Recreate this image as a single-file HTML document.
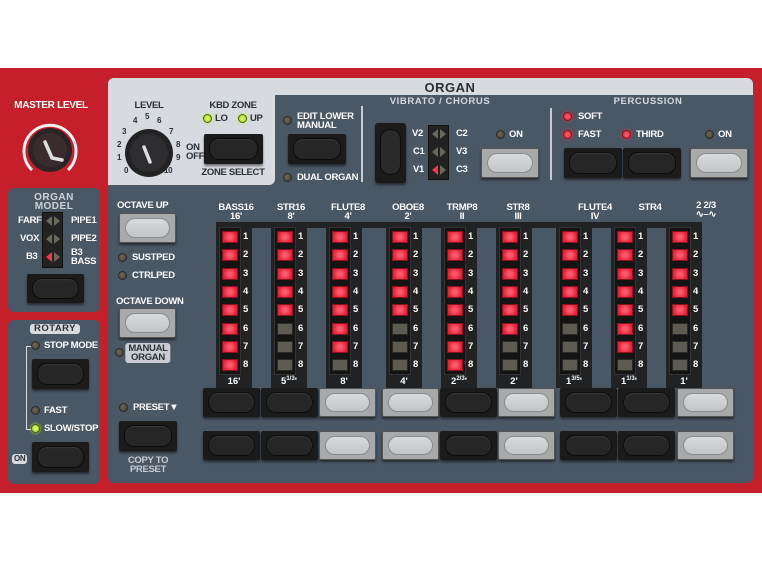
<!DOCTYPE html>
<html><head><meta charset="utf-8"><style>
*{margin:0;padding:0;box-sizing:border-box}
body{width:762px;height:562px;background:#fff;position:relative;overflow:hidden;font-family:"Liberation Sans",sans-serif;font-weight:bold;color:#fff}
.a{position:absolute}
.t{position:absolute;font-size:9.5px;letter-spacing:-0.3px;white-space:nowrap;line-height:10px}
.tc{transform:translateX(-50%);text-align:center}
.dk{color:#2b2f36}
.btn{position:absolute;border-radius:2px;padding:4px 5px}
.btn i{display:block;width:100%;height:100%;border-radius:10px}
.bd{background:#1b1b1c;box-shadow:0 2px 2px rgba(0,0,0,.5)}
.bd i{background:#262627;border:1px solid #0c0c0c;box-shadow:inset 0 1px 1px #3a3a3a}
.bl{background:#a8a9ab;box-shadow:0 2px 2px rgba(0,0,0,.5);border:1px solid #555}
.bl i{background:linear-gradient(#d9dadc,#c3c4c6);border:1px solid #8a8b8d}
.led{position:absolute;width:9px;height:9px;border-radius:50%;background:radial-gradient(circle at 40% 40%,#6e6a5c,#3a3830);border:1px solid #2a2a2a}
.lr{background:radial-gradient(circle,#ff6070,#e0203a);border-color:#8a1020;box-shadow:0 0 3px #f03040}
.lg{background:radial-gradient(circle,#e8ff70,#90d010);border-color:#506010;box-shadow:0 0 3px #c0f030}
.strip{position:absolute;top:222px;width:36px;height:166px;background:#202224}
.slot{position:absolute;left:3px;top:5px;width:22px;height:148px;background:#141414;border:1px solid #333}
.L{position:absolute;left:6px;width:16px;height:12px;background:#5e5c52;border:1px solid #2a2a26}
.L.on{background:radial-gradient(circle,#ff5a6c 20%,#e21e36 80%);border-color:#901020}
.n{position:absolute;left:27px;font-size:9.5px;line-height:10px}
.ft{position:absolute;top:154px;left:0;width:36px;text-align:center;font-size:9.5px}
.ft sup{font-size:6px}
.sel{position:absolute;background:#222;border:1px solid #111}
.tri{position:absolute;width:0;height:0;border-top:5px solid transparent;border-bottom:5px solid transparent}
</style></head><body>
<!-- red panel -->
<div class="a" style="left:0;top:68px;width:762px;height:425px;background:#c41f2b"></div>
<!-- main panel -->
<div class="a" style="left:108px;top:78px;width:645px;height:405px;background:#4a5765;border-radius:6px"></div>
<div class="a" style="left:108px;top:78px;width:645px;height:17px;background:#d7dadf;border-radius:6px 6px 0 0"></div>
<div class="a" style="left:108px;top:78px;width:167px;height:107px;background:#d7dadf;border-radius:6px 0 6px 0"></div>
<div class="t tc dk" style="left:450px;top:81px;font-size:13px;line-height:13px;letter-spacing:0.5px">ORGAN</div>

<!-- master level -->
<div class="t tc" style="left:51px;top:101px;font-size:10px">MASTER LEVEL</div>
<svg class="a" style="left:18px;top:118px" width="64" height="64"><path d="M14 52 A26 26 0 1 1 50 52" fill="none" stroke="#f0f0f0" stroke-width="3"/><circle cx="32" cy="32" r="22" fill="#2a2426"/><circle cx="32" cy="32" r="17" fill="#3a2c2e"/><path d="M27 24 L34 40 L44 42" fill="none" stroke="#ddd" stroke-width="3.5" stroke-linecap="round"/></svg>

<!-- organ model box -->
<div class="a" style="left:8px;top:188px;width:92px;height:124px;background:#4a5765;border-radius:6px"></div>
<div class="t tc" style="left:54px;top:193px;font-size:10px;line-height:9px;color:#cfd3d8;letter-spacing:0.5px">ORGAN<br>MODEL</div>
<div class="t" style="left:18px;top:216px">FARF</div>
<div class="t" style="left:20px;top:234px">VOX</div>
<div class="t" style="left:26px;top:252px">B3</div>
<div class="t" style="left:71px;top:216px">PIPE1</div>
<div class="t" style="left:71px;top:234px">PIPE2</div>
<div class="t" style="left:71px;top:249px;line-height:8.5px">B3<br>BASS</div>
<div class="sel" style="left:42px;top:212px;width:21px;height:56px"></div>
<div class="tri" style="left:46px;top:216px;border-right:6px solid #6a6a5a"></div><div class="tri" style="left:54px;top:216px;border-left:6px solid #6a6a5a"></div>
<div class="tri" style="left:46px;top:234px;border-right:6px solid #6a6a5a"></div><div class="tri" style="left:54px;top:234px;border-left:6px solid #6a6a5a"></div>
<div class="tri" style="left:46px;top:252px;border-right:6px solid #ff3050"></div><div class="tri" style="left:54px;top:252px;border-left:6px solid #6a6a5a"></div>
<div class="btn bd" style="left:27px;top:274px;width:57px;height:29px"><i></i></div>

<!-- rotary box -->
<div class="a" style="left:8px;top:320px;width:92px;height:164px;background:#4a5765;border-radius:6px"></div>
<div class="t tc dk" style="left:55px;top:324px;background:#d7dadf;border-radius:3px;padding:0 4px;letter-spacing:0.5px">ROTARY</div>
<div class="a" style="left:26px;top:346px;width:6px;height:84px;border:1px solid #ddd;border-right:none"></div>
<div class="led" style="left:31px;top:341px"></div><div class="t" style="left:44px;top:341px">STOP MODE</div>
<div class="btn bd" style="left:32px;top:359px;width:57px;height:30px"><i></i></div>
<div class="led" style="left:31px;top:406px"></div><div class="t" style="left:44px;top:406px">FAST</div>
<div class="led lg" style="left:31px;top:424px"></div><div class="t" style="left:44px;top:424px">SLOW/STOP</div>
<div class="t dk" style="left:12px;top:454px;background:#d7dadf;border-radius:3px;padding:0 2px;font-size:8px">ON</div>
<div class="btn bd" style="left:32px;top:442px;width:57px;height:30px"><i></i></div>

<!-- level knob -->
<div class="t tc dk" style="left:149px;top:101px">LEVEL</div>
<div class="t dk" style="left:145px;top:112px;font-size:8px">5</div>
<div class="t dk" style="left:133px;top:116px;font-size:8px">4</div>
<div class="t dk" style="left:157px;top:116px;font-size:8px">6</div>
<div class="t dk" style="left:122px;top:127px;font-size:8px">3</div>
<div class="t dk" style="left:169px;top:127px;font-size:8px">7</div>
<div class="t dk" style="left:117px;top:140px;font-size:8px">2</div>
<div class="t dk" style="left:176px;top:140px;font-size:8px">8</div>
<div class="t dk" style="left:117px;top:153px;font-size:8px">1</div>
<div class="t dk" style="left:176px;top:153px;font-size:8px">9</div>
<div class="t dk" style="left:124px;top:166px;font-size:8px">0</div>
<div class="t dk" style="left:164px;top:166px;font-size:8px">10</div>
<svg class="a" style="left:124px;top:128px" width="50" height="50"><circle cx="25" cy="25" r="24" fill="#222"/><circle cx="25" cy="25" r="19" fill="#2e2e30"/><path d="M20 19 L26 34" stroke="#ddd" stroke-width="3.5" stroke-linecap="round"/></svg>

<!-- kbd zone -->
<div class="t tc dk" style="left:233px;top:101px">KBD ZONE</div>
<div class="led lg" style="left:203px;top:114px"></div><div class="t dk" style="left:215px;top:114px">LO</div>
<div class="led lg" style="left:238px;top:114px"></div><div class="t dk" style="left:250px;top:114px">UP</div>
<div class="t dk" style="left:186px;top:143px;line-height:9px">ON<br>OFF</div>
<div class="btn bd" style="left:204px;top:134px;width:59px;height:30px"><i></i></div>
<div class="t tc dk" style="left:233px;top:168px">ZONE SELECT</div>

<!-- edit lower -->
<div class="led" style="left:283px;top:116px"></div>
<div class="t" style="left:297px;top:112px;line-height:9px">EDIT LOWER<br>MANUAL</div>
<div class="btn bd" style="left:288px;top:134px;width:58px;height:30px"><i></i></div>
<div class="led" style="left:283px;top:173px"></div><div class="t" style="left:297px;top:173px">DUAL ORGAN</div>
<div class="a" style="left:361px;top:106px;width:2px;height:76px;background:#c8ccd2"></div>
<div class="a" style="left:550px;top:108px;width:2px;height:72px;background:#c8ccd2"></div>

<!-- vibrato -->
<div class="t tc" style="left:440px;top:97px;color:#d6dae0;letter-spacing:0.6px">VIBRATO / CHORUS</div>
<div class="a" style="left:375px;top:123px;width:31px;height:60px;background:#1b1b1c;border-radius:3px;box-shadow:0 2px 2px rgba(0,0,0,.5)"><div style="margin:6px 5px;height:46px;border-radius:10px;background:#2a2a2b;border:1px solid #0c0c0c"></div></div>
<div class="t" style="left:412px;top:129px">V2</div><div class="t" style="left:413px;top:147px">C1</div><div class="t" style="left:413px;top:165px">V1</div>
<div class="t" style="left:456px;top:129px">C2</div><div class="t" style="left:456px;top:147px">V3</div><div class="t" style="left:456px;top:165px">C3</div>
<div class="sel" style="left:428px;top:125px;width:21px;height:55px"></div>
<div class="tri" style="left:432px;top:129px;border-right:6px solid #6a6a5a"></div><div class="tri" style="left:440px;top:129px;border-left:6px solid #6a6a5a"></div>
<div class="tri" style="left:432px;top:147px;border-right:6px solid #6a6a5a"></div><div class="tri" style="left:440px;top:147px;border-left:6px solid #6a6a5a"></div>
<div class="tri" style="left:432px;top:165px;border-right:6px solid #ff3050"></div><div class="tri" style="left:440px;top:165px;border-left:6px solid #6a6a5a"></div>
<div class="led" style="left:496px;top:130px"></div><div class="t" style="left:509px;top:130px">ON</div>
<div class="btn bl" style="left:481px;top:148px;width:58px;height:30px"><i></i></div>

<!-- percussion -->
<div class="t tc" style="left:648px;top:97px;color:#d6dae0;letter-spacing:0.6px">PERCUSSION</div>
<div class="led lr" style="left:563px;top:112px"></div><div class="t" style="left:578px;top:112px">SOFT</div>
<div class="led lr" style="left:563px;top:130px"></div><div class="t" style="left:578px;top:130px">FAST</div>
<div class="led lr" style="left:622px;top:130px"></div><div class="t" style="left:636px;top:130px">THIRD</div>
<div class="led" style="left:705px;top:130px"></div><div class="t" style="left:718px;top:130px">ON</div>
<div class="btn bd" style="left:564px;top:148px;width:58px;height:30px"><i></i></div>
<div class="btn bd" style="left:623px;top:148px;width:58px;height:30px"><i></i></div>
<div class="btn bl" style="left:690px;top:148px;width:58px;height:30px"><i></i></div>

<!-- left controls -->
<div class="t" style="left:117px;top:201px">OCTAVE UP</div>
<div class="btn bl" style="left:119px;top:213px;width:57px;height:30px"><i></i></div>
<div class="led" style="left:118px;top:253px"></div><div class="t" style="left:132px;top:253px">SUSTPED</div>
<div class="led" style="left:118px;top:271px"></div><div class="t" style="left:132px;top:271px">CTRLPED</div>
<div class="t" style="left:116px;top:297px">OCTAVE DOWN</div>
<div class="btn bl" style="left:119px;top:308px;width:57px;height:30px"><i></i></div>
<div class="led" style="left:115px;top:348px"></div>
<div class="t tc dk" style="left:148px;top:343px;background:#c9cdd3;border-radius:3px;padding:1px 3px;line-height:9px">MANUAL<br>ORGAN</div>
<div class="led" style="left:119px;top:403px"></div><div class="t" style="left:133px;top:403px">PRESET▼</div>
<div class="btn bd" style="left:119px;top:421px;width:58px;height:30px"><i></i></div>
<div class="t tc" style="left:148px;top:456px;line-height:9px;color:#c9cdd3">COPY TO<br>PRESET</div>

<!-- drawbar labels -->
<div class="t tc" style="left:236px;top:203px;line-height:9px">BASS16<br>16'</div>
<div class="t tc" style="left:291px;top:203px;line-height:9px">STR16<br>8'</div>
<div class="t tc" style="left:348px;top:203px;line-height:9px">FLUTE8<br>4'</div>
<div class="t tc" style="left:408px;top:203px;line-height:9px">OBOE8<br>2'</div>
<div class="t tc" style="left:462px;top:203px;line-height:9px">TRMP8<br>II</div>
<div class="t tc" style="left:518px;top:203px;line-height:9px">STR8<br>III</div>
<div class="t tc" style="left:595px;top:203px;line-height:9px">FLUTE4<br>IV</div>
<div class="t tc" style="left:650px;top:203px;line-height:9px">STR4</div>
<div class="t tc" style="left:706px;top:201px;line-height:9px">2 2/3<br>∿–∿</div>

<div class="a" style="left:216px;top:222px;width:486px;height:6px;background:#202224"></div>
<div id="db"></div>
<script>
var X=[230,285,340,400,455,510,570,625,680],C=[8,5,7,5,8,6,5,7,5],
F=["16'","5<sup>1/3</sup>'","8'","4'","2<sup>2/3</sup>'","2'","1<sup>3/5</sup>'","1<sup>1/3</sup>'","1'"],h="";
for(var c=0;c<9;c++){h+='<div class="strip" style="left:'+(X[c]-14)+'px"><div class="slot"></div>';
for(var i=0;i<8;i++){var t=9+18.3*i;h+='<div class="L'+(i<C[c]?' on':'')+'" style="top:'+t.toFixed(1)+'px"></div><div class="n" style="top:'+(t+1).toFixed(1)+'px">'+(i+1)+'</div>';}
h+='<div class="ft">'+F[c]+'</div></div>';}
var BX=[203,261,319,382,440,498,560,618,677],L=[0,0,1,1,0,1,0,0,1];
for(var r=0;r<2;r++)for(var c=0;c<9;c++)h+='<div class="btn '+(L[c]?'bl':'bd')+'" style="left:'+BX[c]+'px;top:'+(r?431:388)+'px;width:57px;height:29px"><i></i></div>';
document.getElementById('db').innerHTML=h;
</script>
</body></html>
